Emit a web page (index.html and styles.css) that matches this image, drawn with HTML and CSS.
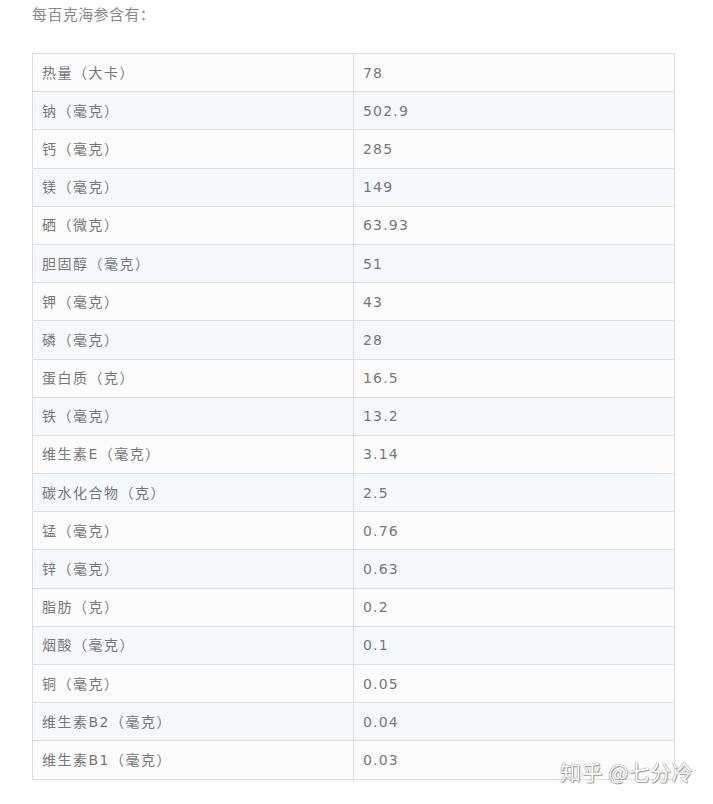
FILE: index.html
```html
<!DOCTYPE html>
<html lang="zh">
<head>
<meta charset="utf-8">
<link rel="stylesheet" href="styles.css">
</head>
<body>
<div class="page">
  <p class="intro">每百克海参含有：</p>
  <table class="nutri">
    <tbody>
      <tr><td>热量（大卡）</td><td>78</td></tr>
      <tr><td>钠（毫克）</td><td>502.9</td></tr>
      <tr><td>钙（毫克）</td><td>285</td></tr>
      <tr><td>镁（毫克）</td><td>149</td></tr>
      <tr><td>硒（微克）</td><td>63.93</td></tr>
      <tr><td>胆固醇（毫克）</td><td>51</td></tr>
      <tr><td>钾（毫克）</td><td>43</td></tr>
      <tr><td>磷（毫克）</td><td>28</td></tr>
      <tr><td>蛋白质（克）</td><td>16.5</td></tr>
      <tr><td>铁（毫克）</td><td>13.2</td></tr>
      <tr><td>维生素E（毫克）</td><td>3.14</td></tr>
      <tr><td>碳水化合物（克）</td><td>2.5</td></tr>
      <tr><td>锰（毫克）</td><td>0.76</td></tr>
      <tr><td>锌（毫克）</td><td>0.63</td></tr>
      <tr><td>脂肪（克）</td><td>0.2</td></tr>
      <tr><td>烟酸（毫克）</td><td>0.1</td></tr>
      <tr><td>铜（毫克）</td><td>0.05</td></tr>
      <tr><td>维生素B2（毫克）</td><td>0.04</td></tr>
      <tr><td>维生素B1（毫克）</td><td>0.03</td></tr>
    </tbody>
  </table>
  <div class="watermark">知乎 @七分冷</div>
</div>
</body>
</html>
```
FILE: styles.css
```css
html, body {
  margin: 0;
  padding: 0;
  background: #ffffff;
}
.page {
  position: relative;
  width: 713px;
  height: 804px;
  padding: 0 39px 0 32px;
  box-sizing: border-box;
  font-family: "Noto Sans CJK SC", "Noto Sans", sans-serif;
}
.intro {
  margin: 0;
  padding-top: 4px;
  height: 49px;
  font-size: 15px;
  line-height: 20px;
  color: #8a8a8a;
  letter-spacing: 0.4px;
}
.nutri {
  width: 643px;
  border-collapse: collapse;
  table-layout: fixed;
  color: #777777;
  font-family: "DejaVu Sans", "Noto Sans CJK SC", sans-serif;
  font-size: 14px;
  letter-spacing: 1.2px;
}
.nutri td {
  border: 1px solid #dedede;
  height: 38.2px;
  padding: 0 9px;
  line-height: 20px;
  vertical-align: middle;
  box-sizing: border-box;
}
.nutri td:first-child {
  width: 321px;
  letter-spacing: 1.5px;
}
.nutri tr:nth-child(odd) td {
  background: #fcfcfc;
}
.nutri tr:nth-child(even) td {
  background: #f6f9fc;
}
.watermark {
  position: absolute;
  left: 560px;
  top: 757px;
  font-size: 21px;
  line-height: 28px;
  color: #ffffff;
  letter-spacing: 0.5px;
  text-shadow: 0 0 1px #8a8a8a, 0 0 1px #8a8a8a, 1px 1px 1px #9a9a9a;
}
```
